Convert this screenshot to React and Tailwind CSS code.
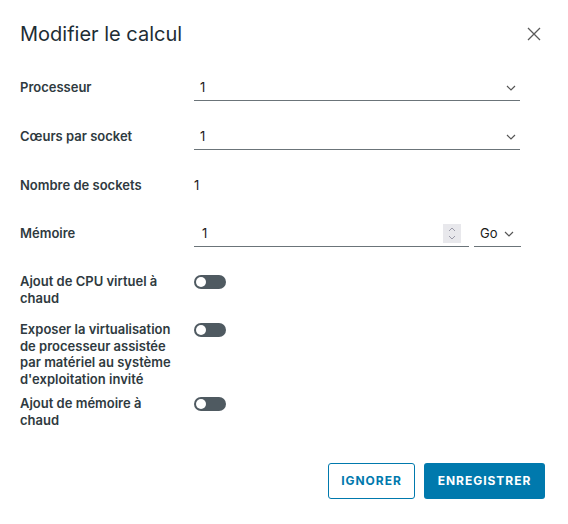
import React from 'react';

const Chevron = ({ className = '' }) => (
  <svg width="10" height="6" viewBox="0 0 10 6" className={className}>
    <path d="M1 1l4 4 4-4" fill="none" stroke="#565656" strokeWidth="1.2" />
  </svg>
);

const SelectField = ({ value }) => (
  <div className="flex items-center justify-between w-[326px] h-[26px] border-b border-[#6b7479] pl-[6px] pr-[4px]">
    <span className="text-[13px] text-[#1b1b1b]">{value}</span>
    <Chevron />
  </div>
);

const Toggle = () => (
  <div className="w-[32px] h-[14px] rounded-full bg-[#4f5a61] flex items-center px-[2px] mt-[2px]">
    <div className="w-[10px] h-[10px] rounded-full bg-white" />
  </div>
);

const Row = ({ label, children, className = '' }) => (
  <div className={`flex items-center h-[26px] ${className}`}>
    <div className="w-[174px] text-[13px] font-semibold text-[#2f3a40]">{label}</div>
    {children}
  </div>
);

const ToggleRow = ({ label, className = '' }) => (
  <div className={`flex items-start ${className}`}>
    <div className="w-[174px] pr-[16px] text-[13px] leading-[16.5px] font-semibold text-[#2f3a40]">{label}</div>
    <Toggle />
  </div>
);

export default function App() {
  return (
    <div className="w-[568px] h-[524px] bg-white relative" style={{ fontFamily: 'Inter, "Noto Sans", sans-serif' }}>
      <div className="pl-[20px] pr-[23px] pt-[20px]">
        <div className="flex items-center justify-between h-[28px]">
          <h1 className="text-[20px] text-[#1e2d34] font-normal">Modifier le calcul</h1>
          <svg width="14" height="14" viewBox="0 0 14 14" className="mr-[4px]">
            <path d="M1 1l12 12M13 1L1 13" stroke="#5a5a5a" strokeWidth="1.3" />
          </svg>
        </div>

        <Row label="Processeur" className="mt-[27px]">
          <SelectField value="1" />
        </Row>
        <Row label="Cœurs par socket" className="mt-[23px]">
          <SelectField value="1" />
        </Row>
        <Row label="Nombre de sockets" className="mt-[23px]">
          <span className="text-[13px] text-[#1b1b1b]">1</span>
        </Row>
        <Row label="Mémoire" className="mt-[22px]">
          <div className="flex items-end gap-[5px]">
            <div className="flex items-center justify-between w-[275px] h-[26px] border-b border-[#6b7479] pl-[8px] pr-[8px]">
              <span className="text-[13px] text-[#1b1b1b]">1</span>
              <div className="w-[18px] h-[19px] bg-[#e8e8ec] flex flex-col items-center justify-center gap-[3px]">
                <svg width="8" height="5" viewBox="0 0 8 5"><path d="M1 4l3-3 3 3" fill="none" stroke="#9a9aa8" strokeWidth="1" /></svg>
                <svg width="8" height="5" viewBox="0 0 8 5"><path d="M1 1l3 3 3-3" fill="none" stroke="#9a9aa8" strokeWidth="1" /></svg>
              </div>
            </div>
            <div className="flex items-center gap-[6px] w-[47px] h-[26px] border-b border-[#6b7479] pl-[6px]">
              <span className="text-[13px] text-[#1b1b1b]">Go</span>
              <Chevron />
            </div>
          </div>
        </Row>

        <ToggleRow label="Ajout de CPU virtuel à chaud" className="mt-[26px]" />
        <ToggleRow label="Exposer la virtualisation de processeur assistée par matériel au système d'exploitation invité" className="mt-[15px]" />
        <ToggleRow label="Ajout de mémoire à chaud" className="mt-[8px]" />

        <div className="flex justify-end gap-[9px] mt-[35px]">
          <button className="h-[36px] w-[87px] rounded-[3px] border border-[#0079ad] text-[#0079ad] text-[12px] font-bold tracking-[0.08em] bg-white">
            IGNORER
          </button>
          <button className="h-[36px] w-[121px] rounded-[3px] bg-[#0079ad] text-white text-[12px] font-bold tracking-[0.08em]">
            ENREGISTRER
          </button>
        </div>
      </div>
    </div>
  );
}
